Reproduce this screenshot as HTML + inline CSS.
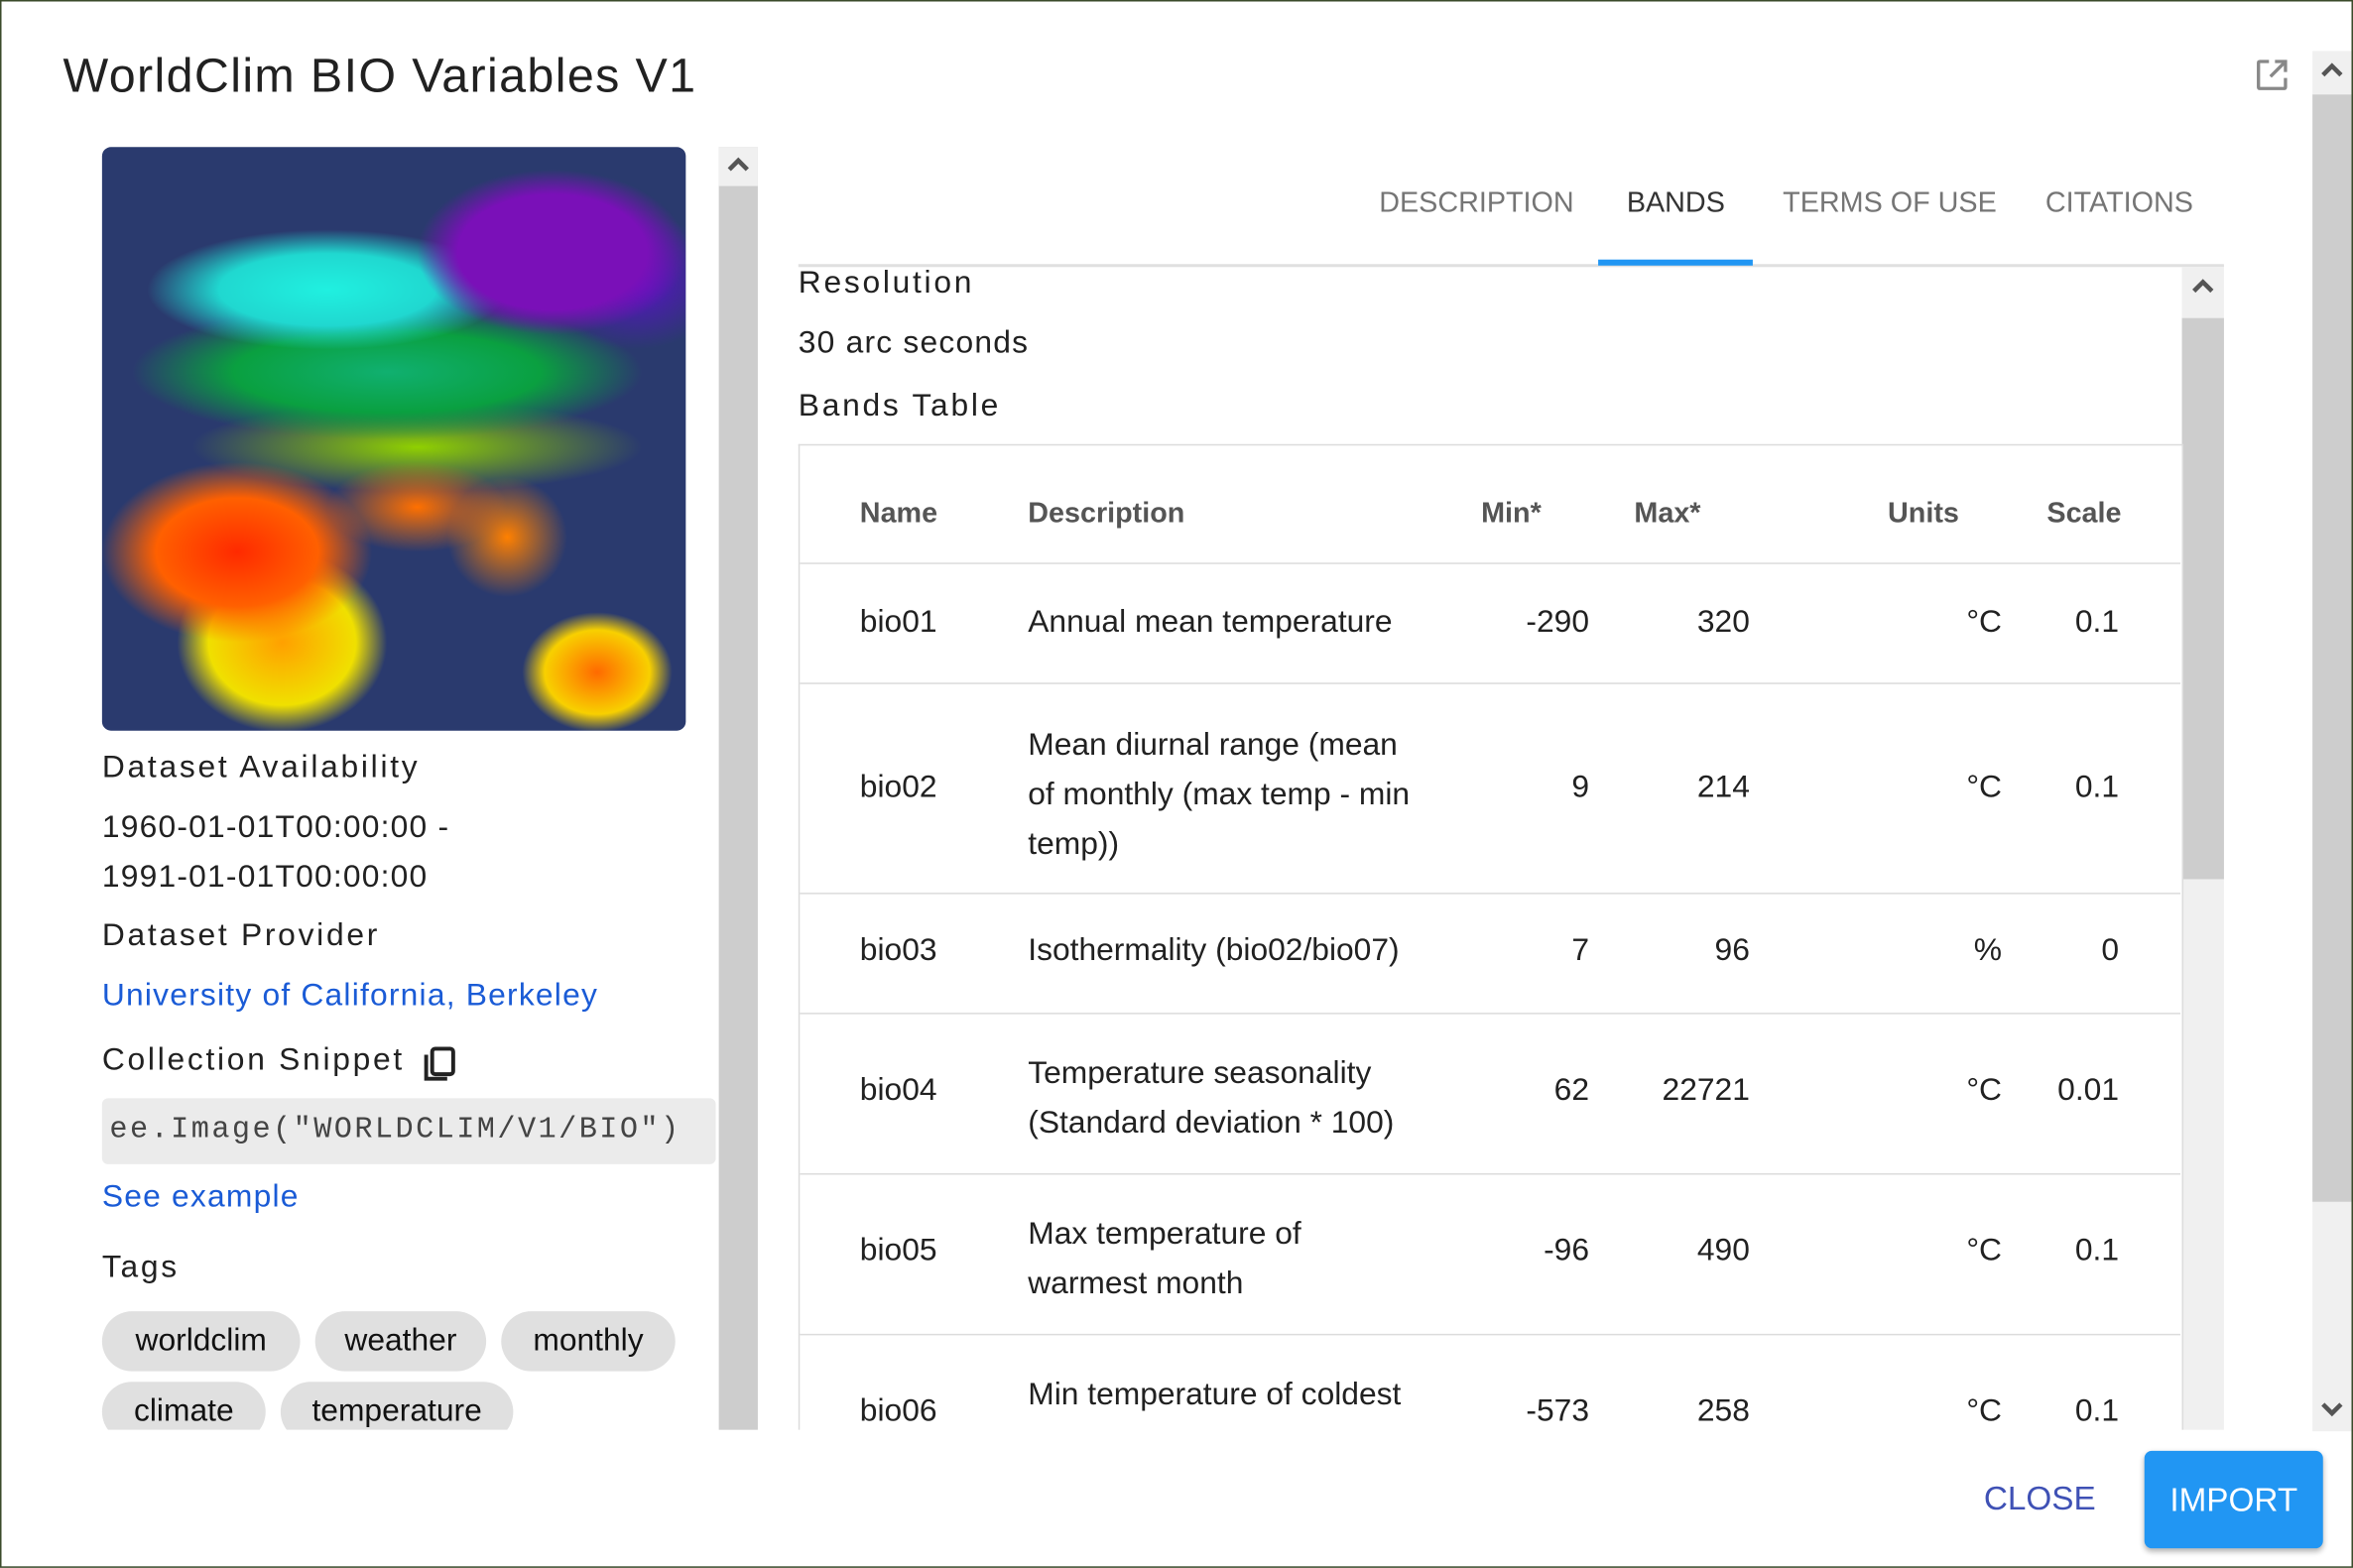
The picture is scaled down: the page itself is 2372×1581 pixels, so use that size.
<!DOCTYPE html>
<html><head><meta charset="utf-8">
<style>
html,body{margin:0;padding:0;background:#fff;overflow:hidden;width:2372px;height:1581px}
#w{position:absolute;left:0;top:0;width:1568px;height:1045px;transform:scale(1.51276);transform-origin:0 0;font-family:"Liberation Sans",Arial,sans-serif;color:#212121;overflow:hidden;background:#fff;box-sizing:border-box;border:1px solid #3a4a2a;}
.a{position:absolute;white-space:nowrap}
.t{font-size:21px;letter-spacing:1.8px}
.v{letter-spacing:0.8px}
.link{color:#1a5bd6}
.chip{position:absolute;height:40px;border-radius:20px;background:#e0e0e0;font-size:21px;line-height:40px;text-align:center;color:#111}
.tab{position:absolute;top:124px;font-size:19px;color:#757575;letter-spacing:0}
.r{position:absolute;font-size:21px;color:#212121;white-space:nowrap}
.h{position:absolute;font-size:19px;color:#555;font-weight:bold;top:331px}
.hl{position:absolute;left:532px;width:920px;height:1px;background:#dcdcdc}
</style></head><body><div id="w">
<div class="a" style="left:41px;top:31px;font-size:32px;font-weight:500;color:#212121;letter-spacing:0.9px">WorldClim BIO Variables V1</div>

<!-- map -->
<div class="a" style="left:67px;top:97px;width:389px;height:389px;border-radius:6px;overflow:hidden;background:#2a3a6e">
<div class="a" style="left:0;top:0;width:389px;height:389px;background:
radial-gradient(ellipse 90px 55px at 300px 70px,#7a10b8 0,#7a10b8 70%,transparent 100%),
radial-gradient(ellipse 60px 45px at 355px 90px,#5a10c8 0,transparent 100%),
radial-gradient(ellipse 120px 40px at 150px 95px,#20f0e0 0,#20d8d0 60%,transparent 100%),
radial-gradient(ellipse 170px 45px at 190px 150px,#10b070 0,#0aa040 60%,transparent 100%),
radial-gradient(ellipse 90px 60px at 90px 270px,#ff2a00 0,#ff6000 60%,transparent 100%),
radial-gradient(ellipse 70px 60px at 120px 330px,#ffa000 0,#f0e000 70%,transparent 100%),
radial-gradient(ellipse 60px 30px at 210px 240px,#ff7000 0,transparent 100%),
radial-gradient(ellipse 50px 40px at 330px 350px,#ff6a00 0,#f8d000 70%,transparent 100%),
radial-gradient(ellipse 150px 30px at 210px 200px,#90d000 0,transparent 100%),
radial-gradient(ellipse 40px 40px at 270px 260px,#ff8000 0,transparent 100%);"></div>
</div>

<!-- left scrollbar -->
<div class="a" style="left:478px;top:97px;width:26px;height:855px;background:#cdcdcd"></div>
<div class="a" style="left:478px;top:97px;width:26px;height:26px;background:#f0f0f0"></div>
<svg class="a" style="left:482px;top:101px" width="18" height="16"><path d="M3 11 L9 5 L15 11" stroke="#555" stroke-width="3" fill="none"/></svg>

<div class="a t" style="left:67px;top:499px">Dataset Availability</div>
<div class="a t v" style="left:67px;top:539px">1960-01-01T00:00:00 -</div>
<div class="a t v" style="left:67px;top:572px">1991-01-01T00:00:00</div>
<div class="a t" style="left:67px;top:611px">Dataset Provider</div>
<div class="a t link v" style="left:67px;top:651px">University of California, Berkeley</div>
<div class="a t" style="left:67px;top:694px">Collection Snippet</div>
<svg class="a" style="left:280px;top:696px" width="24" height="26"><rect x="7" y="2" width="14" height="17" rx="2" fill="none" stroke="#222" stroke-width="2.6"/><path d="M3 6 V22 H17" fill="none" stroke="#222" stroke-width="2.6"/></svg>
<div class="a" style="left:67px;top:731px;width:409px;height:44px;background:#ebebeb;border-radius:4px"></div>
<div class="a" style="left:72px;top:741px;font-family:'Liberation Mono',monospace;font-size:20px;color:#444;letter-spacing:1.6px">ee.Image("WORLDCLIM/V1/BIO")</div>
<div class="a t link v" style="left:67px;top:785px">See example</div>
<div class="a t" style="left:67px;top:832px">Tags</div>
<div class="a" style="left:0;top:0;width:520px;height:952px;overflow:hidden">
<div class="chip" style="left:67px;top:873px;width:132px">worldclim</div>
<div class="chip" style="left:209px;top:873px;width:114px">weather</div>
<div class="chip" style="left:333px;top:873px;width:116px">monthly</div>
<div class="chip" style="left:67px;top:920px;width:109px">climate</div>
<div class="chip" style="left:186px;top:920px;width:155px">temperature</div>
</div>

<!-- open icon -->
<svg class="a" style="left:1501px;top:37px" width="24" height="24"><path d="M10 3 H4 Q3 3 3 4 V20 Q3 21 4 21 H20 Q21 21 21 20 V14" fill="none" stroke="#888" stroke-width="2.2"/><path d="M14 3 H21 V10 M21 3 L11 13" fill="none" stroke="#888" stroke-width="2.2"/></svg>

<!-- outer scrollbar -->
<div class="a" style="left:1540px;top:33px;width:28px;height:920px;background:#f0f0f0"></div>
<div class="a" style="left:1540px;top:62px;width:28px;height:738px;background:#cdcdcd"></div>
<svg class="a" style="left:1544px;top:38px" width="18" height="16"><path d="M3 11 L9 5 L15 11" stroke="#555" stroke-width="3" fill="none"/></svg>
<svg class="a" style="left:1544px;top:930px" width="18" height="16"><path d="M3 5 L9 11 L15 5" stroke="#555" stroke-width="3" fill="none"/></svg>

<!-- tabs -->
<div class="tab" style="left:918px">DESCRIPTION</div>
<div class="tab" style="left:1083px;color:#333">BANDS</div>
<div class="tab" style="left:1187px">TERMS OF USE</div>
<div class="tab" style="left:1362px">CITATIONS</div>
<div class="a" style="left:531px;top:175px;width:950px;height:2px;background:#e0e0e0"></div>
<div class="a" style="left:1064px;top:172px;width:103px;height:4px;background:#2196f3"></div>

<!-- inner -->
<div class="a" style="left:1453px;top:177px;width:28px;height:775px;background:#f0f0f0"></div>
<div class="a" style="left:1453px;top:211px;width:28px;height:374px;background:#cdcdcd"></div>
<svg class="a" style="left:1458px;top:182px" width="18" height="16"><path d="M3 11 L9 5 L15 11" stroke="#555" stroke-width="3" fill="none"/></svg>

<div class="a t" style="left:531px;top:176px">Resolution</div>
<div class="a t v" style="left:531px;top:216px">30 arc seconds</div>
<div class="a t" style="left:531px;top:258px">Bands Table</div>

<div class="a" style="left:0;top:0;width:1568px;height:952px;overflow:hidden">
<div class="a" style="left:531px;top:295px;width:921px;height:700px;border-left:1px solid #dcdcdc;border-right:1px solid #dcdcdc;border-top:1px solid #dcdcdc"></div>
<div class="h" style="left:572px">Name</div>
<div class="h" style="left:684px">Description</div>
<div class="h" style="left:986px">Min*</div>
<div class="h" style="left:1088px">Max*</div>
<div class="h" style="left:1257px">Units</div>
<div class="h" style="left:1363px">Scale</div>
<div class="hl" style="top:374px"></div>
<div class="hl" style="top:454px"></div>
<div class="hl" style="top:594px"></div>
<div class="hl" style="top:674px"></div>
<div class="hl" style="top:781px"></div>
<div class="hl" style="top:888px"></div>

<div class="r" style="left:572px;top:402px">bio01</div>
<div class="r" style="left:684px;top:402px">Annual mean temperature</div>
<div class="r" style="right:510px;top:402px">-290</div>
<div class="r" style="right:403px;top:402px">320</div>
<div class="r" style="right:235px;top:402px">°C</div>
<div class="r" style="right:157px;top:402px">0.1</div>

<div class="r" style="left:572px;top:512px">bio02</div>
<div class="r" style="left:684px;top:479px;line-height:33px">Mean diurnal range (mean<br>of monthly (max temp - min<br>temp))</div>
<div class="r" style="right:510px;top:512px">9</div>
<div class="r" style="right:403px;top:512px">214</div>
<div class="r" style="right:235px;top:512px">°C</div>
<div class="r" style="right:157px;top:512px">0.1</div>

<div class="r" style="left:572px;top:621px">bio03</div>
<div class="r" style="left:684px;top:621px">Isothermality (bio02/bio07)</div>
<div class="r" style="right:510px;top:621px">7</div>
<div class="r" style="right:403px;top:621px">96</div>
<div class="r" style="right:235px;top:621px">%</div>
<div class="r" style="right:157px;top:621px">0</div>

<div class="r" style="left:572px;top:714px">bio04</div>
<div class="r" style="left:684px;top:698px;line-height:33px">Temperature seasonality<br>(Standard deviation * 100)</div>
<div class="r" style="right:510px;top:714px">62</div>
<div class="r" style="right:403px;top:714px">22721</div>
<div class="r" style="right:235px;top:714px">°C</div>
<div class="r" style="right:157px;top:714px">0.01</div>

<div class="r" style="left:572px;top:821px">bio05</div>
<div class="r" style="left:684px;top:805px;line-height:33px">Max temperature of<br>warmest month</div>
<div class="r" style="right:510px;top:821px">-96</div>
<div class="r" style="right:403px;top:821px">490</div>
<div class="r" style="right:235px;top:821px">°C</div>
<div class="r" style="right:157px;top:821px">0.1</div>

<div class="r" style="left:572px;top:928px">bio06</div>
<div class="r" style="left:684px;top:912px;line-height:33px">Min temperature of coldest<br>month</div>
<div class="r" style="right:510px;top:928px">-573</div>
<div class="r" style="right:403px;top:928px">258</div>
<div class="r" style="right:235px;top:928px">°C</div>
<div class="r" style="right:157px;top:928px">0.1</div>
</div>

<!-- footer -->
<div class="a" style="left:1321px;top:985px;font-size:22px;color:#3f51b5">CLOSE</div>
<div class="a" style="left:1428px;top:966px;width:119px;height:65px;background:#2196f3;border-radius:5px;box-shadow:0 2px 4px rgba(0,0,0,0.3);color:#fff;font-size:22px;line-height:65px;text-align:center">IMPORT</div>
</div></body></html>
